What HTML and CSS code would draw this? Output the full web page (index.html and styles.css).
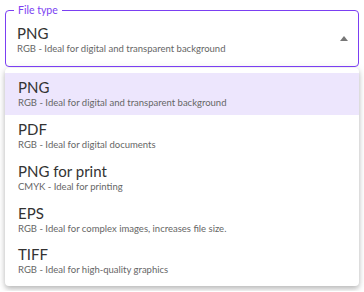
FILE: index.html
```html
<!DOCTYPE html>
<html lang="en">
<head>
    <meta charset="UTF-8">
    <title>File type</title>
    <link rel="stylesheet" href="styles.css">
</head>
<body>
    <div class="field">
        <fieldset class="outline">
            <legend>File type</legend>
        </fieldset>
        <div class="value">
            <div class="primary">PNG</div>
            <div class="secondary">RGB - Ideal for digital and transparent background</div>
        </div>
        <span class="arrow"></span>
    </div>

    <ul class="menu">
        <li class="item selected">
            <div class="primary">PNG</div>
            <div class="secondary">RGB - Ideal for digital and transparent background</div>
        </li>
        <li class="item">
            <div class="primary">PDF</div>
            <div class="secondary">RGB - Ideal for digital documents</div>
        </li>
        <li class="item">
            <div class="primary">PNG for print</div>
            <div class="secondary">CMYK - Ideal for printing</div>
        </li>
        <li class="item">
            <div class="primary">EPS</div>
            <div class="secondary">RGB - Ideal for complex images, increases file size.</div>
        </li>
        <li class="item">
            <div class="primary">TIFF</div>
            <div class="secondary">RGB - Ideal for high-quality graphics</div>
        </li>
    </ul>
</body>
</html>
```

FILE: styles.css
```css
:root {
    --purple: #7b3ff2;
    --purple-light: #ede6fd;
    --text: #333;
    --muted: #666;
}
html, body {
    margin: 0;
    padding: 0;
    background: #fff;
    font-family: Lato, "Open Sans", sans-serif;
}
body {
    padding: 5px 5px;
}
.field {
    position: relative;
    height: 62px;
    padding: 0 11px 0 12px;
    display: flex;
    align-items: center;
    justify-content: space-between;
}
.outline {
    position: absolute;
    inset: 0;
    margin: 0;
    padding: 0 8px;
    border: 1.5px solid var(--purple);
    border-radius: 4px;
    pointer-events: none;
}
.outline legend {
    padding: 0 4px;
    font-size: 10.5px;
    color: var(--purple);
    line-height: 11px;
}
.value {
    padding-top: 6px;
}
.primary {
    font-size: 15px;
    color: var(--text);
    line-height: 18px;
}
.secondary {
    font-size: 9.5px;
    color: var(--muted);
    line-height: 13px;
}
.arrow {
    width: 0;
    height: 0;
    border-left: 4px solid transparent;
    border-right: 4px solid transparent;
    border-bottom: 5px solid #777;
    margin-top: 4px;
}
.menu {
    list-style: none;
    margin: 1px 0 0 0;
    padding: 5px 0 4px 0;
    background: #fff;
    border-radius: 4px;
    box-shadow: 0 3px 5px rgba(0,0,0,0.2), 0 1px 8px rgba(0,0,0,0.12);
}
.item {
    height: 41.75px;
    padding: 0 13px;
    display: flex;
    flex-direction: column;
    justify-content: center;
}
.item.selected {
    background: var(--purple-light);
}
```
